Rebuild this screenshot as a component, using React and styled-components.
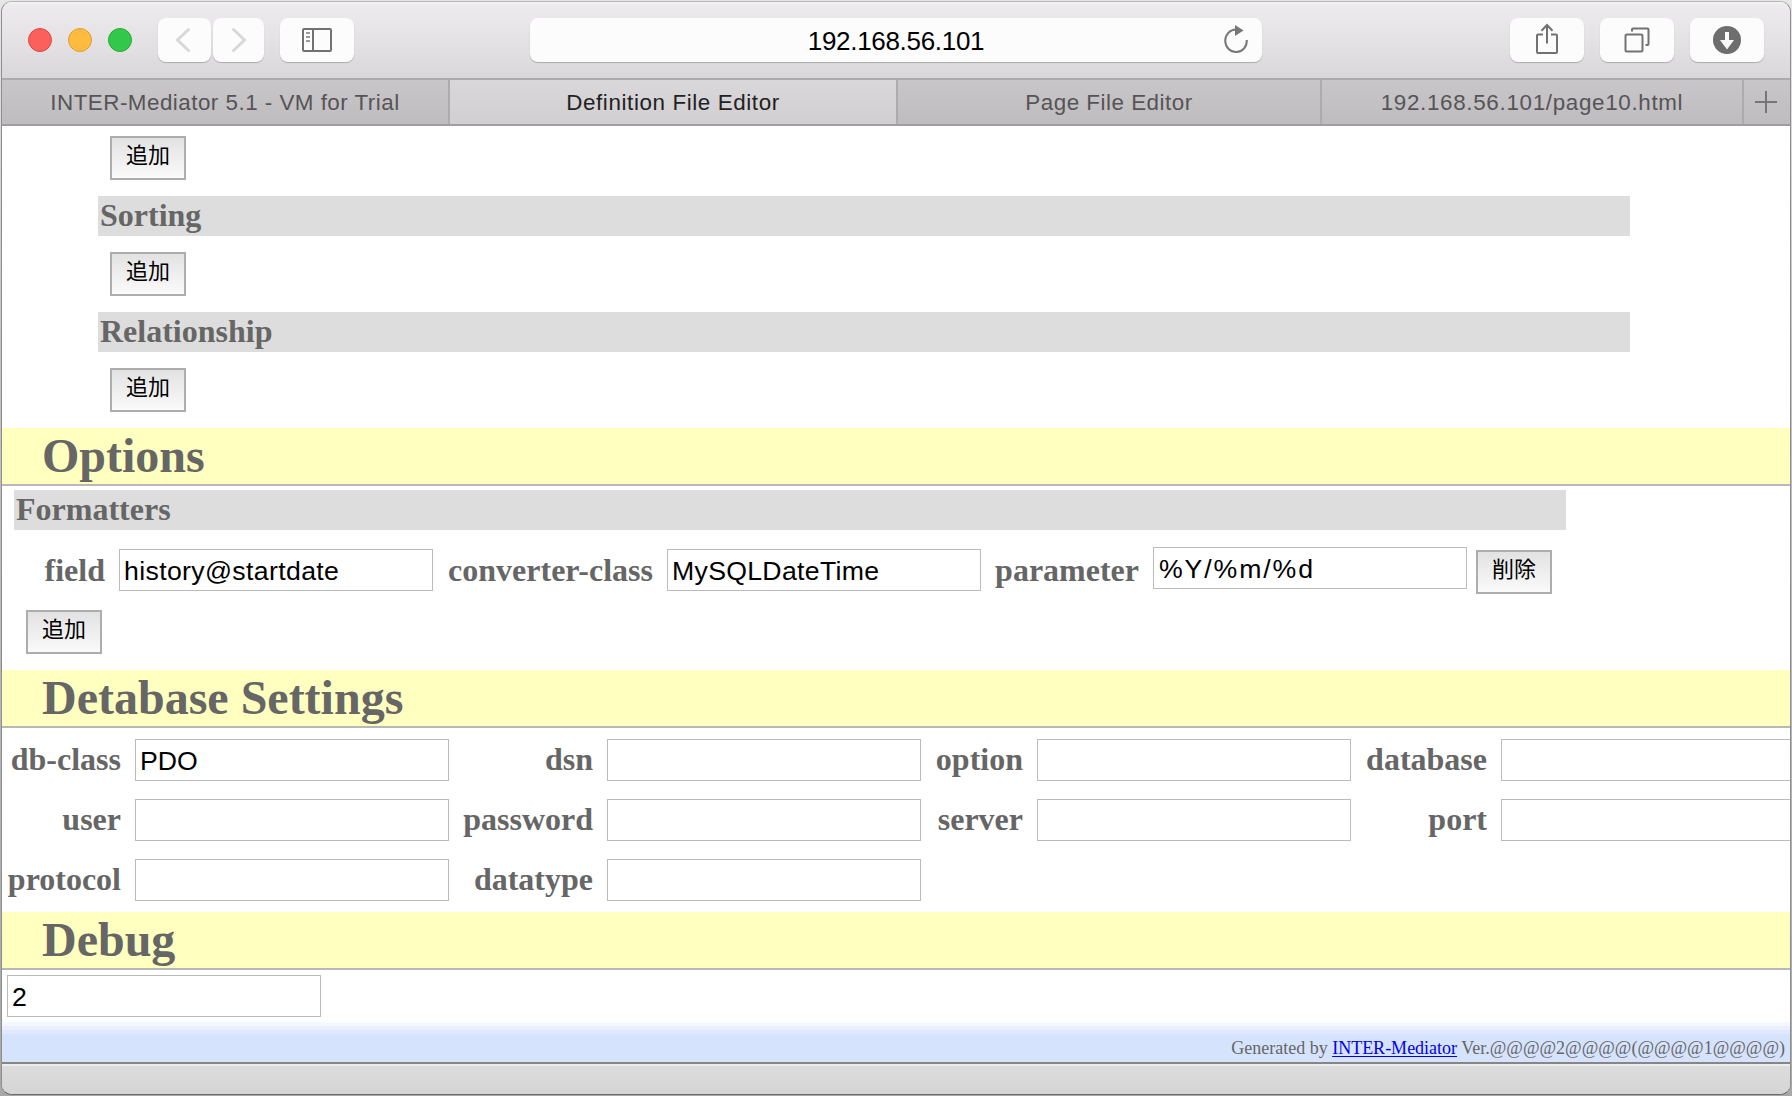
import React from "react";
import styled, { createGlobalStyle } from "styled-components";

const Global = createGlobalStyle`
  * { box-sizing: border-box; }
  html, body { margin: 0; padding: 0; background: #e4e4e4; }
  body { overflow: hidden; }
`;

const serif = `"Liberation Serif", "Times New Roman", serif`;
const sans = `"Liberation Sans", Arial, "Noto Sans CJK JP", sans-serif`;

const Desktop = styled.div`
  width: 1792px;
  height: 1096px;
  padding: 1px;
  background: linear-gradient(#e6e6e6, #c4c4c4 30%, #a8a8a8);
  overflow: hidden;
`;

const Window = styled.div`
  display: flex;
  flex-direction: column;
  width: 1790px;
  height: 1094px;
  border: 1px solid #8e8e8e;
  border-top-color: #b4b6b3;
  border-bottom-color: #6c6c6c;
  border-radius: 11px;
  background: #fff;
  overflow: hidden;
`;

const Toolbar = styled.header`
  display: flex;
  flex: none;
  height: 76px;
  padding: 16px 26px 0;
  background: linear-gradient(#f6f5f6 0, #edebed 3px, #e5e3e5 45%, #d9d7d9);
`;

const Lights = styled.div`
  display: flex;
  gap: 16px;
  padding-top: 10px;
  width: 130px;
`;

const Light = styled.span`
  width: 24px;
  height: 24px;
  border-radius: 50%;
  background: ${(p) => p.$fill};
  border: 1px solid ${(p) => p.$edge};
`;

const ToolButton = styled.button`
  display: flex;
  align-items: center;
  justify-content: center;
  width: ${(p) => p.$w}px;
  height: 44px;
  margin: 0 0 0 ${(p) => p.$gap || 0}px;
  padding: ${(p) => p.$pad || 0};
  border: 0;
  border-radius: 8px;
  background: #fcfcfc;
  box-shadow: 0 1px 1px rgba(0, 0, 0, 0.22);
`;

const Address = styled.div`
  display: grid;
  grid-template-columns: 1fr auto 1fr;
  align-items: center;
  width: 732px;
  height: 44px;
  margin: 0 248px 0 176px;
  padding-right: 13px;
  border-radius: 8px;
  background: #fcfcfc;
  box-shadow: 0 1px 1px rgba(0, 0, 0, 0.22);
  font: 26px/44px ${sans};
  letter-spacing: -0.3px;
  color: #000;

  span { grid-column: 2; padding: 2px 0 0 13px; line-height: 42px; }
  svg { grid-column: 3; justify-self: end; }
`;

const TabBar = styled.nav`
  display: flex;
  flex: none;
  height: 48px;
  border-top: 2px solid #acaaac;
  border-bottom: 2px solid #a09ea0;
  background: linear-gradient(#c9c6c9, #bfbcbf);
`;

const Tab = styled.div`
  display: flex;
  justify-content: center;
  flex: none;
  width: ${(p) => p.$w}px;
  border-right: 2px solid #adabad;
  background: ${(p) => (p.$active ? "linear-gradient(#d9d7d9, #d1cfd1)" : "none")};
  color: ${(p) => (p.$active ? "#222" : "#565456")};
  font: 22.4px/45px ${sans};
  letter-spacing: ${(p) => p.$spacing}px;
  white-space: nowrap;
`;

const NewTab = styled.div`
  display: flex;
  flex: 1;
  align-items: center;
  justify-content: center;
  padding-right: 2px;
`;

const Page = styled.main`
  flex: none;
  height: 936px;
  overflow: hidden;
  color: #666;
  font-family: ${serif};
`;

const Indented = styled.section`
  padding: 10px 160px 16px 96px;
`;

const ActionRow = styled.div`
  padding-left: 12px;
`;

const SubHeading = styled.h3`
  width: ${(p) => (p.$w ? p.$w + "px" : "auto")};
  height: 40px;
  margin: ${(p) => p.$margin || "16px 0"};
  padding-left: 2px;
  background: #ddd;
  font: bold 32px/39px ${serif};
`;

const Heading = styled.h2`
  height: 58px;
  margin: 0;
  padding-left: 40px;
  border-bottom: 2px solid #b8b8b8;
  background: #ffffc0;
  font: bold 48px/56px ${serif};
`;

const FormButton = styled.button`
  display: block;
  width: 76px;
  height: 44px;
  margin: 0;
  padding: 0 0 9px;
  border: 2px solid #adadad;
  border-radius: 0;
  background: linear-gradient(#e2e2e2, #fafafa);
  color: #000;
  font: 22px/31px "Noto Sans CJK JP", sans-serif;
`;

const Field = styled.input`
  display: block;
  width: 314px;
  height: 42px;
  margin: 0;
  padding: 3px 3px 0 4px;
  border: 1px solid #bbb;
  border-radius: 0;
  background: #fff;
  color: #000;
  font: 26.667px ${sans};
  letter-spacing: ${(p) => p.$spacing || 0}px;
`;

const Label = styled.label`
  width: ${(p) => (p.$w ? p.$w + "px" : "auto")};
  padding-right: 14px;
  text-align: right;
  font: bold 32px/40px ${serif};
  white-space: nowrap;
`;

const OptionsBody = styled.section`
  padding: 4px 12px 16px;
`;

const FormatterRow = styled.div`
  display: flex;
  height: 64px;
  padding-top: 3px;
  margin-left: -12px;

  label { line-height: 42px; }
`;

const RaisedField = styled(Field)`
  margin: -2px 9px 0 0;
  padding-left: 5px;
`;

const DeleteButton = styled(FormButton)`
  margin-top: 1px;
`;

const AddRow = styled.div`
  padding-left: 12px;
`;

const DbGrid = styled.section`
  display: grid;
  grid-template-columns: 133px 314px 158px 314px 116px 314px 150px 314px;
  grid-auto-rows: 42px;
  row-gap: 18px;
  height: 184px;
  padding-top: 11px;
`;

const DebugBody = styled.section`
  height: 52px;
  padding: 5px;
`;

const Footer = styled.footer`
  height: 40px;
  padding: 14px 5px 0 0;
  background: linear-gradient(
    #f5f8ff 0 4px,
    #eaf0ff 4px 8px,
    #e0e9fe 8px 12px,
    #d6e3fd 12px
  );
  font: 18px/25px ${serif};
  text-align: right;

  a { color: #0000ee; text-underline-offset: 2px; }
`;

const StatusBar = styled.div`
  flex: 1;
  border-top: 2px solid #868686;
  background: linear-gradient(#ececec 0 2px, #dcdcdc 2px, #d5d5d5);
`;

const Chevron = ({ flip }) => (
  <svg width="18" height="28" viewBox="0 0 18 28" fill="none" stroke="#d8d8d8" strokeWidth="3" strokeLinecap="round">
    <path d={flip ? "M3.5 3.5 14.5 14 3.5 24.5" : "M14.5 3.5 3.5 14 14.5 24.5"} />
  </svg>
);

const SidebarIcon = () => (
  <svg width="30" height="24" viewBox="0 0 30 24" fill="none" stroke="#727272" strokeWidth="2">
    <rect x="1" y="1" width="28" height="22" rx="1" />
    <path d="M11 1V23" />
    <path d="M4 5h4M4 9h4M4 13h4" stroke="#9a9a9a" />
  </svg>
);

const ReloadIcon = () => (
  <svg width="26" height="30" viewBox="0 0 26 30">
    <path d="M13 4.5A10.8 11.3 0 1 0 23.8 15" fill="none" stroke="#777" strokeWidth="2" />
    <path d="M12 0V11L20.5 5.5Z" fill="#777" />
  </svg>
);

const ShareIcon = () => (
  <svg width="24" height="32" viewBox="0 0 24 32" fill="none" stroke="#727272" strokeWidth="2">
    <path d="M8 11.5H3Q2 11.5 2 12.5V29Q2 30 3 30H21Q22 30 22 29V12.5Q22 11.5 21 11.5H16" />
    <path d="M12 20.5V2M6.5 7.8 12 2l5.5 5.8" />
  </svg>
);

const TabsIcon = () => (
  <svg width="26" height="26" viewBox="0 0 26 26" fill="none" stroke="#727272" strokeWidth="2">
    <rect x="1.5" y="7.5" width="17" height="17" rx="1.5" />
    <path d="M8 4.5V2.5Q8 1.5 9 1.5H23.5Q24.5 1.5 24.5 2.5V17Q24.5 18 23.5 18H21.5" />
  </svg>
);

const DownloadIcon = () => (
  <svg width="28" height="28" viewBox="0 0 28 28">
    <circle cx="14" cy="14" r="14" fill="#6e6e6e" />
    <path d="M12 6H16V14H21L14 23.5L7 14H12Z" fill="#fcfcfc" />
  </svg>
);

const PlusIcon = () => (
  <svg width="22" height="22" viewBox="0 0 22 22" stroke="#777577" strokeWidth="2">
    <path d="M11 0V22M0 11H22" />
  </svg>
);

const tabs = [
  { title: "INTER-Mediator 5.1 - VM for Trial", w: 448, spacing: 0.48 },
  { title: "Definition File Editor", w: 448, spacing: 0.6, active: true },
  { title: "Page File Editor", w: 424, spacing: 0.5 },
  { title: "192.168.56.101/page10.html", w: 422, spacing: 0.67 },
];

const dbFields = [
  ["db-class", "PDO"],
  ["dsn", ""],
  ["option", ""],
  ["database", ""],
  ["user", ""],
  ["password", ""],
  ["server", ""],
  ["port", ""],
  ["protocol", ""],
  ["datatype", ""],
];

export default function App() {
  return (
    <>
      <Global />
      <Desktop>
        <Window>
          <Toolbar>
            <Lights>
              <Light $fill="#fc605b" $edge="#e24640" />
              <Light $fill="#fdbc40" $edge="#de9f34" />
              <Light $fill="#33c84a" $edge="#27aa35" />
            </Lights>
            <ToolButton $w={53} $pad="0 3px 0 0"><Chevron /></ToolButton>
            <ToolButton $w={51} $gap={2} $pad="0 0 0 1px"><Chevron flip /></ToolButton>
            <ToolButton $w={74} $gap={16}><SidebarIcon /></ToolButton>
            <Address>
              <span>192.168.56.101</span>
              <ReloadIcon />
            </Address>
            <ToolButton $w={74} $pad="0 0 2px"><ShareIcon /></ToolButton>
            <ToolButton $w={74} $gap={16}><TabsIcon /></ToolButton>
            <ToolButton $w={74} $gap={16}><DownloadIcon /></ToolButton>
          </Toolbar>
          <TabBar>
            {tabs.map((t) => (
              <Tab key={t.title} $w={t.w} $spacing={t.spacing} $active={t.active}>{t.title}</Tab>
            ))}
            <NewTab><PlusIcon /></NewTab>
          </TabBar>
          <Page>
            <Indented>
              <ActionRow><FormButton>追加</FormButton></ActionRow>
              <SubHeading>Sorting</SubHeading>
              <ActionRow><FormButton>追加</FormButton></ActionRow>
              <SubHeading>Relationship</SubHeading>
              <ActionRow><FormButton>追加</FormButton></ActionRow>
            </Indented>
            <Heading>Options</Heading>
            <OptionsBody>
              <SubHeading $w={1552} $margin="0 0 16px">Formatters</SubHeading>
              <FormatterRow>
                <Label $w={117}>field</Label>
                <Field defaultValue="history@startdate" $spacing={0.35} />
                <Label $w={234}>converter-class</Label>
                <Field defaultValue="MySQLDateTime" $spacing={0.3} />
                <Label $w={172}>parameter</Label>
                <RaisedField defaultValue="%Y/%m/%d" $spacing={1.9} />
                <DeleteButton>削除</DeleteButton>
              </FormatterRow>
              <AddRow><FormButton>追加</FormButton></AddRow>
            </OptionsBody>
            <Heading>Detabase Settings</Heading>
            <DbGrid>
              {dbFields.map(([name, value]) => (
                <React.Fragment key={name}>
                  <Label>{name}</Label>
                  <Field defaultValue={value} />
                </React.Fragment>
              ))}
            </DbGrid>
            <Heading>Debug</Heading>
            <DebugBody><Field defaultValue="2" /></DebugBody>
            <Footer>
              Generated by <a href="#im">INTER-Mediator</a> Ver.@@@@2@@@@(@@@@1@@@@)
            </Footer>
          </Page>
          <StatusBar />
        </Window>
      </Desktop>
    </>
  );
}
